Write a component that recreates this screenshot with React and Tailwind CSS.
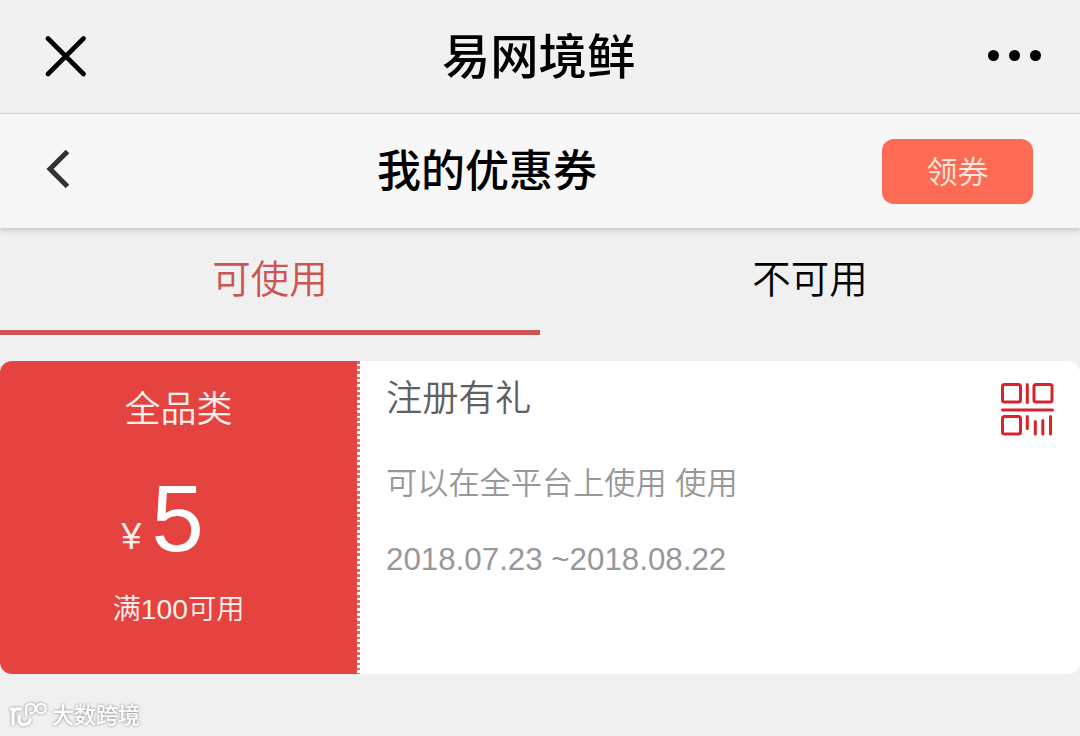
import React from 'react';

const coupons = [
    {
        id: 1,
        category: '全品类',
        amount: '5',
        condition: '满100可用',
        title: '注册有礼',
        scope: '可以在全平台上使用 使用',
        period: '2018.07.23 ~2018.08.22',
    },
];

function CloseIcon() {
    return (
        <svg width="42" height="42" viewBox="0 0 42 42" fill="none" stroke="#000" strokeWidth="4.6" strokeLinecap="round">
            <path d="M3 2.500 38.500 38M38.500 2.500 3 38" />
        </svg>
    );
}

function BackIcon() {
    return (
        <svg className="mb-[5px]" width="24" height="40" viewBox="0 0 24 40" fill="none" stroke="#333" strokeWidth="5">
            <path d="M21.5 2.5 4 20 21.5 37.5" />
        </svg>
    );
}

function CodeIcon() {
    return (
        <svg width="54" height="54" viewBox="0 0 54 54" fill="none" stroke="#d8232a" strokeWidth="3" strokeLinecap="round">
            <rect x="2.5" y="2.5" width="18" height="17.5" rx="2" />
            <rect x="34" y="2.5" width="18" height="17.5" rx="2" />
            <rect x="2.5" y="34.5" width="18" height="17.5" rx="2" />
            <path d="M27.3 2.500v18M2.500 28h50M27.300 34.500v12M35.300 39.500v12.500M42.800 38.500v13.500M50.500 34.500v17.500" />
        </svg>
    );
}

function Watermark() {
    return (
        <div className="flex items-center gap-[3px] pl-[9px] pt-[26px] [filter:drop-shadow(0_0_1.5px_rgba(0,0,0,0.45))]">
            <svg width="40" height="28" viewBox="0 0 40 28" fill="none" stroke="#fff" strokeLinecap="round">
                <path d="M2 8h2v15M4 12.500C4.500 9 7.500 7 11.500 8" strokeWidth="3" />
                <path d="M10.500 15.500C9 20.500 11.500 24 15.500 23.500c3-.3 5-2 5.500-4.500" strokeWidth="3.4" />
                <path d="M17 14V7.500a4.700 4.700 0 1 1 4.700 4.700" strokeWidth="2.2" />
                <circle cx="32" cy="7.500" r="4.700" strokeWidth="2.2" />
            </svg>
            <span className="mt-[3px] text-[22px] leading-[26px] font-medium text-white">大数跨境</span>
        </div>
    );
}

function CouponCard({ coupon }) {
    return (
        <article className="flex h-[313px] overflow-hidden rounded-[12px] bg-white">
            <div className="flex w-[357px] shrink-0 flex-col items-center bg-[#e54340] text-[#fff0ec]">
                <p className="mt-[22px] text-[36px] leading-[54px] font-[350]">{coupon.category}</p>
                {/* Amount */}
                <p className="mt-[30px] mr-[32px] flex h-[104px] items-baseline gap-[10px] leading-[104px]">
                    <span className="pb-[2px] text-[36px] [translate:0_-2px]">¥</span>
                    <span className="text-[94px] text-white">{coupon.amount}</span>
                </p>
                <p className="mt-[18px] text-[28.3px] leading-[40px] font-[350]">{coupon.condition}</p>
            </div>
            {/* Perforated edge */}
            <div className="w-[3px] shrink-0 bg-[repeating-linear-gradient(to_bottom,#e06a68_0_2.6px,#fff_2.6px_5.2px)]" />
            <div className="flex-1 pl-[26px] pt-[11px]">
                <h2 className="text-[36.3px] leading-[54px] font-[350] text-[#606060]">{coupon.title}</h2>
                <p className="mt-[35px] text-[31.2px] leading-[46px] font-[350] text-[#98989b]">{coupon.scope}</p>
                <p className="mt-[30px] text-[31.3px] leading-[46px] text-[#98989b]">{coupon.period}</p>
            </div>
            <div className="pt-[21px] pr-[26px]">
                <CodeIcon />
            </div>
        </article>
    );
}

export default function App() {
    return (
        <div className="h-[736px] w-[1080px] overflow-hidden bg-[#f0f0f0] font-['Liberation_Sans','Noto_Sans_CJK_SC',sans-serif]">
            {/* Browser bar */}
            <nav className="flex h-[114px] items-center border-b border-[#dcdcdc] bg-[#f1f1f1] pr-[39px] pl-[45px]">
                <CloseIcon />
                <h1 className="mt-[1px] ml-[355px] text-[48.3px] leading-[72px] font-medium text-black">易网境鲜</h1>
                <div className="mb-[2px] ml-auto flex gap-[10px]">
                    <span className="size-[11px] rounded-full bg-black" />
                    <span className="size-[11px] rounded-full bg-black" />
                    <span className="size-[11px] rounded-full bg-black" />
                </div>
            </nav>

            {/* Page header */}
            <header className="relative flex h-[114px] items-center bg-[#f7f7f7] pr-[47px] pl-[46px] shadow-[0_2px_6px_rgba(0,0,0,0.2)]">
                <BackIcon />
                <h2 className="mt-[1px] ml-[307px] text-[44px] leading-[66px] font-medium text-black">我的优惠券</h2>
                <button className="ml-auto h-[65px] w-[151px] rounded-[12px] bg-[#fd6b55] pt-[2px] text-[31px] leading-[63px] font-[350] text-[#ffe9df]">
                    领券
                </button>
            </header>

            {/* Tabs */}
            <div className="grid h-[107px] grid-cols-2 text-center text-[38.5px] leading-[100px]">
                <button className="border-b-[5px] border-[#cb5454] pt-[2px] font-[350] text-[#cb5454]">可使用</button>
                <button className="border-b-[5px] border-transparent pt-[2px] font-[350] text-black">不可用</button>
            </div>

            <main className="pt-[26px]">
                {coupons.map((coupon) => (
                    <CouponCard key={coupon.id} coupon={coupon} />
                ))}
            </main>

            <Watermark />
        </div>
    );
}
